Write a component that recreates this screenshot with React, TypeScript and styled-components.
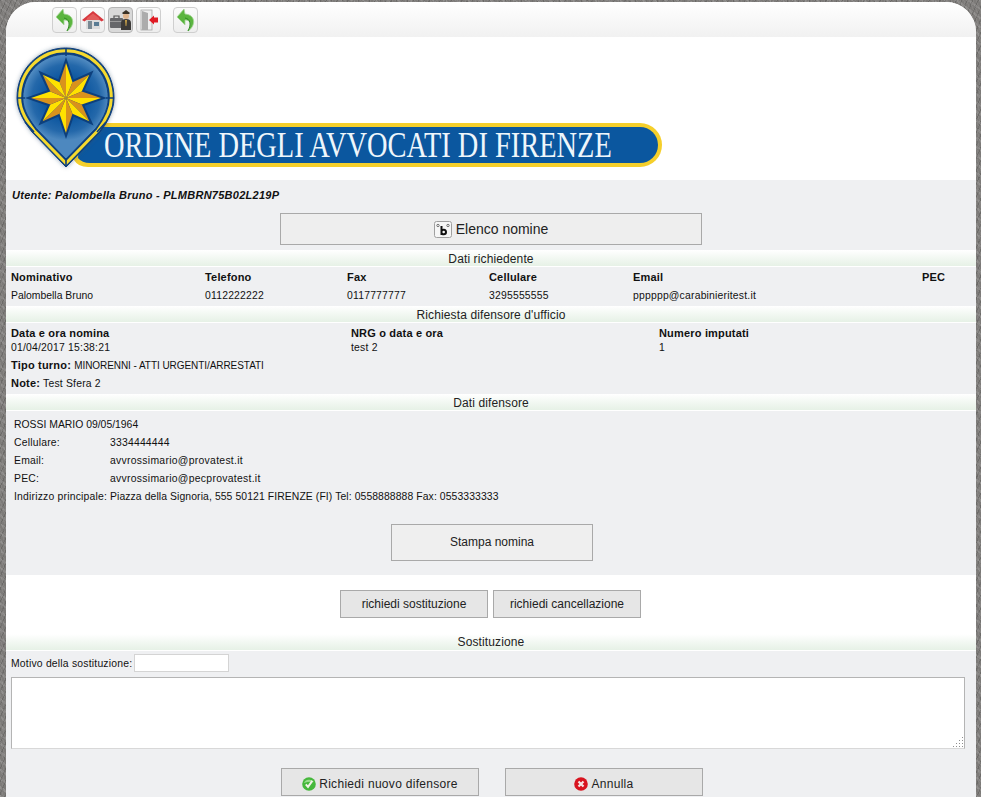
import React from "react"
import styled, { createGlobalStyle } from "styled-components"

const GlobalStyle = createGlobalStyle`
  html, body {
    margin: 0;
    height: 100%;
    overflow: hidden;
    background-color: #7d7b79;
    background-image:
      repeating-linear-gradient(37deg, rgba(255, 255, 255, 0.1) 0 2px, transparent 2px 7px),
      repeating-linear-gradient(113deg, rgba(0, 0, 0, 0.14) 0 1px, transparent 1px 5px),
      repeating-linear-gradient(71deg, rgba(255, 255, 255, 0.07) 0 1px, transparent 1px 3px);
  }
  * {
    box-sizing: border-box;
  }
`

const Page = styled.div`
  width: 970px;
  margin: 2px 0 0 6px;
  background: white;
  border-radius: 30px 30px 0 0;
  color: #111;
  font-family: "Liberation Sans", Arial, sans-serif;
  font-size: 10.4px;
  letter-spacing: 0.2px;
`

const Toolbar = styled.div`
  height: 35px;
  padding: 5px 0 0 46px;
  display: flex;
  gap: 3px;
  background: linear-gradient(#ffffff, #f1f1f1);
  border-radius: 30px 30px 0 0;
`

const ToolButton = styled.div<{ $active?: boolean; $apart?: boolean }>`
  width: 25px;
  height: 26px;
  margin-left: ${(p) => (p.$apart ? "9px" : "0")};
  display: flex;
  align-items: center;
  justify-content: center;
  border: 1px solid ${(p) => (p.$active ? "#b5b5b5" : "#cfcfcf")};
  border-radius: 4px;
  background: ${(p) => (p.$active ? "#d9d9d9" : "linear-gradient(#fbfbfb, #eeeeee)")};
`

const Banner = styled.div`
  height: 143px;
  svg {
    display: block;
  }
`

const Panel = styled.div<{ $height: number }>`
  height: ${(p) => p.$height}px;
  background: #eff0f2;
`

const UserPanel = styled(Panel)`
  padding-top: 9px;
  display: flex;
  flex-direction: column;
  align-items: center;
`

const UserLine = styled.div`
  align-self: flex-start;
  padding-left: 6px;
  font-size: 11px;
  line-height: 13px;
  font-weight: bold;
  font-style: italic;
  letter-spacing: 0.26px;
`

const Button = styled.button<{ $width: number; $height: number; $size?: number }>`
  width: ${(p) => p.$width}px;
  height: ${(p) => p.$height}px;
  padding: 0;
  display: inline-flex;
  align-items: center;
  justify-content: center;
  gap: 3px;
  font-family: "Liberation Sans", Arial, sans-serif;
  font-size: ${(p) => p.$size ?? 12}px;
  letter-spacing: 0;
  color: #222;
  background: #e6e6e6;
  border: 1px solid #a9a9a9;
  border-radius: 0;
`

const ListButton = styled(Button)`
  margin-top: 11px;
  gap: 4px;
  background: #eeeeee;
`

const PrintRow = styled.div`
  padding: 19px 0 0 2px;
  display: flex;
  justify-content: center;
`

const PrintButton = styled(Button)`
  padding-bottom: 2px;
  background: #efefef;
`

const SectionTitle = styled.div<{ $lift?: boolean }>`
  height: 17px;
  line-height: ${(p) => (p.$lift ? "17px" : "19px")};
  text-align: center;
  font-size: 12px;
  letter-spacing: 0.12px;
  color: #222;
  background: linear-gradient(#ffffff, #e6f1e6);
  border-bottom: 1px solid #ffffff;
`

const RequesterGrid = styled.div`
  padding: 1px 0 0 5px;
  display: grid;
  grid-template-columns: 194px 142px 142px 144px 289px 1fr;
  grid-auto-rows: 18px;
  align-items: center;
`

const NominaGrid = styled.div`
  padding: 3px 0 0 5px;
  display: grid;
  grid-template-columns: 340px 308px 1fr;
  grid-auto-rows: 14px;
  align-items: center;
`

const Key = styled.div`
  font-size: 11px;
  font-weight: bold;
  letter-spacing: 0.18px;
`

const Plain = styled.div`
  letter-spacing: 0;
`

const NoteLine = styled.div<{ $top: number }>`
  padding: ${(p) => p.$top}px 0 0 5px;
  line-height: 13px;
  b {
    font-size: 11px;
    letter-spacing: 0.2px;
  }
`

const ShiftValue = styled.span`
  font-size: 10px;
  letter-spacing: -0.06px;
`

const DefenderBlock = styled.div`
  padding: 4px 0 0 8px;
  display: grid;
  grid-template-columns: 96px 1fr;
  grid-auto-rows: 18px;
  align-items: center;
`

const DefenderName = styled.div`
  grid-column: 1 / -1;
  letter-spacing: 0;
`

const MailValue = styled.div`
  letter-spacing: 0.29px;
`

const AddressValue = styled.div`
  letter-spacing: 0.09px;
`

const ActionRow = styled.div`
  height: 59px;
  padding: 15px 1px 0 0;
  display: flex;
  justify-content: center;
  gap: 5px;
`

const Motive = styled.label`
  padding: 3px 0 0 5px;
  display: flex;
  align-items: center;
  gap: 2px;
`

const MotiveInput = styled.input`
  width: 95px;
  height: 18px;
  padding: 0 2px;
  background: white;
  border: 1px solid #d4d4d4;
`

const MotiveArea = styled.textarea`
  display: block;
  width: 954px;
  height: 72px;
  margin: 5px 0 0 5px;
  background: white;
  border: 1px solid #b4b4b4;
  border-bottom-color: #d8d8d8;
  &::-webkit-resizer {
    background-image:
      linear-gradient(135deg, #ffffff 56%, transparent 56%),
      radial-gradient(#8f8f8f 0.8px, transparent 1px);
    background-size: 100% 100%, 3px 3px;
  }
`

const FormActions = styled.div`
  padding: 19px 0 0 2px;
  display: flex;
  justify-content: center;
  gap: 26px;
`

const FormButton = styled(Button)`
  padding-top: 3px;
  letter-spacing: 0.3px;
`

const BackIcon = () => (
  <svg width="23" height="24" viewBox="0 0 23 24">
    <path
      d="M10 1 L3 9 L11 17 L11 12 C16 12 18 15 14 23 C21 19 23 7 11 6 Z"
      fill="#5bb53f"
      stroke="#a6d698"
      strokeWidth="0.8"
    />
    <path d="M14 23 C18 16 16 11 11 10" fill="none" stroke="#2f8a22" strokeWidth="1" />
  </svg>
)

const HomeIcon = () => (
  <svg width="22" height="20" viewBox="0 0 22 20">
    <path d="M4 9 H18 V19 H4 Z" fill="#dcdcdc" />
    <path d="M11 1 L22 10 L19.5 11.5 L11 5 L2.5 11.5 L0 10 Z" fill="#d8393f" />
    <path d="M5 8 L11 3.5 L17 8 L17 10 H5 Z" fill="#e35c5c" />
    <rect x="6" y="11" width="4" height="8" fill="#7a8a94" />
    <rect x="12" y="12" width="5" height="4" fill="#5a7c94" />
  </svg>
)

const OfficerIcon = () => (
  <svg width="22" height="22" viewBox="0 0 22 22">
    <rect x="0" y="9" width="13" height="10" rx="1" fill="#66676a" />
    <path d="M4 9 V7 H9 V9" fill="none" stroke="#555" strokeWidth="1.2" />
    <rect x="0" y="12" width="13" height="1" fill="#9a9a9a" />
    <path d="M11 21 V14 Q11 10 16 10 Q21 10 21 14 V21 Z" fill="#3c3a38" />
    <circle cx="16" cy="7" r="3" fill="#dfb48c" />
    <path d="M12 4 L16 1 L20 4 L19 5 H13 Z" fill="#3a3226" />
    <path d="M15 11 H17 L16.4 17 H15.6 Z" fill="#c9a24a" />
  </svg>
)

const ExitIcon = () => (
  <svg width="22" height="22" viewBox="0 0 22 22">
    <rect x="3" y="1" width="11" height="20" fill="#efefef" stroke="#a8a8a8" strokeWidth="0.8" />
    <path d="M4 2 L10 4 V21 H4 Z" fill="#acacac" />
    <path d="M11 11 L16 6.5 V8.5 H20 V13.5 H16 V15.5 Z" fill="#e01b24" />
  </svg>
)

const AlphabetIcon = () => (
  <svg width="18" height="17" viewBox="0 0 18 17">
    <rect x="0.5" y="0.5" width="17" height="16" rx="2" fill="#f6f6f6" stroke="#a0a0a0" />
    <path d="M7.5 5 V14 M7.5 10.5 C7.5 8 12 8 12 11 C12 14 7.5 14 7.5 11.5" fill="none" stroke="#111" strokeWidth="2" />
    <circle cx="4" cy="4.5" r="1.2" fill="none" stroke="#555" strokeWidth="0.8" />
    <circle cx="14" cy="4.5" r="1.2" fill="none" stroke="#555" strokeWidth="0.8" />
  </svg>
)

const CheckIcon = () => (
  <svg width="14" height="14" viewBox="0 0 14 14">
    <circle cx="7" cy="7" r="6.8" fill="#46b83c" />
    <path d="M2 6 A5.4 4.4 0 0 1 12 5 Q7 4 2 6 Z" fill="#9ade8e" />
    <path d="M3.8 7.3 L6 9.8 L10.3 3.9" fill="none" stroke="#f2f2e8" strokeWidth="2" />
  </svg>
)

const CrossIcon = () => (
  <svg width="14" height="14" viewBox="0 0 14 14">
    <circle cx="7" cy="7" r="6.8" fill="#d8141f" />
    <path d="M4.5 4.5 L9.5 9.5 M9.5 4.5 L4.5 9.5" stroke="#f6e6e6" strokeWidth="2.2" />
  </svg>
)

// star facets, alternating yellow and orange around the centre of the pin
const starPoint = (deg: number, r: number) => {
  const a = ((deg - 90) * Math.PI) / 180
  return `${(66 + r * Math.cos(a)).toFixed(1)},${(98 + r * Math.sin(a)).toFixed(1)}`
}
const tips = [0, 45, 90, 135, 180, 225, 270, 315]
const tipRadius = (deg: number) => (deg % 90 === 0 ? 35 : 33)
const INNER = 17
const starOutline = (grow: number) =>
  tips
    .map((d) => `${starPoint(d, tipRadius(d) + grow)} ${starPoint(d + 22.5, INNER + grow / 2)}`)
    .join(" ")

const PIN = "M17 98 C17 68 40 48 65.5 48 C91 48 114 68 114 98 C114 112 106 124 100 132 L66 167 L32 132 C26 124 17 112 17 98 Z"

const Logo = () => (
  <svg width="670" height="143" viewBox="6 37 670 143">
    <defs>
      <radialGradient id="pinBlue" cx="66" cy="98" r="48" gradientUnits="userSpaceOnUse">
        <stop offset="0.5" stopColor="#0d57a0" />
        <stop offset="0.8" stopColor="#2468aa" />
        <stop offset="1" stopColor="#4d88bf" />
      </radialGradient>
      <filter id="pinGlow" x="-20%" y="-20%" width="140%" height="140%">
        <feDropShadow dx="0" dy="0" stdDeviation="2" floodColor="#33506e" floodOpacity="0.5" />
      </filter>
    </defs>
    <path d="M74 123 H640 A22 22 0 0 1 640 167 H88 Q78 167 74 160 Z" fill="#f5cf2b" />
    <path d="M80 127 H640 A18 18 0 0 1 640 163 H90 Q82 163 78 158 Z" fill="#0b579f" />
    <text
      transform="translate(104 157) scale(0.812 1)"
      fontFamily="'Liberation Serif', 'Times New Roman', serif"
      fontSize="35"
      fill="#eef6fb"
      letterSpacing="0"
    >
      ORDINE DEGLI AVVOCATI DI FIRENZE
    </text>
    <g filter="url(#pinGlow)">
      <path d={PIN} fill="#0d3f7c" stroke="#0d3f7c" strokeWidth="1" />
    </g>
    <path d={PIN} fill="#0d3f7c" stroke="#f5d92e" strokeWidth="3.2" transform="translate(65.5 99) scale(0.945) translate(-65.5 -99)" />
    <path d={PIN} fill="url(#pinBlue)" stroke="#0d3f7c" strokeWidth="1" transform="translate(65.5 100) scale(0.88) translate(-65.5 -100)" />
    <path
      d="M66 48 V56 M17 98 H25 M106 98 H114 M106 122 L97 132 M25 122 L34 132 M66 158 V167"
      stroke="#0d3f7c"
      strokeWidth="1.6"
    />
    <polygon points={starOutline(6)} fill="#0d3f7c" />
    {tips.map((d) => (
      <g key={d}>
        <polygon points={`66,98 ${starPoint(d, tipRadius(d))} ${starPoint(d - 22.5, INNER)}`} fill="#d9921c" />
        <polygon points={`66,98 ${starPoint(d, tipRadius(d))} ${starPoint(d + 22.5, INNER)}`} fill="#ffe100" />
      </g>
    ))}
  </svg>
)

export default function App() {
  return (
    <>
      <GlobalStyle />
      <Page>
        <Toolbar>
          <ToolButton><BackIcon /></ToolButton>
          <ToolButton><HomeIcon /></ToolButton>
          <ToolButton $active><OfficerIcon /></ToolButton>
          <ToolButton><ExitIcon /></ToolButton>
          <ToolButton $apart><BackIcon /></ToolButton>
        </Toolbar>
        <Banner><Logo /></Banner>
        <UserPanel $height={70}>
          <UserLine>Utente: Palombella Bruno - PLMBRN75B02L219P</UserLine>
          <ListButton $width={422} $height={32} $size={14}>
            <AlphabetIcon /> Elenco nomine
          </ListButton>
        </UserPanel>
        <SectionTitle>Dati richiedente</SectionTitle>
        <Panel $height={39}>
          <RequesterGrid>
            <Key>Nominativo</Key>
            <Key>Telefono</Key>
            <Key>Fax</Key>
            <Key>Cellulare</Key>
            <Key>Email</Key>
            <Key>PEC</Key>
            <Plain>Palombella Bruno</Plain>
            <div>0112222222</div>
            <div>0117777777</div>
            <div>3295555555</div>
            <div>pppppp@carabinieritest.it</div>
            <div />
          </RequesterGrid>
        </Panel>
        <SectionTitle>Richiesta difensore d'ufficio</SectionTitle>
        <Panel $height={71}>
          <NominaGrid>
            <Key>Data e ora nomina</Key>
            <Key>NRG o data e ora</Key>
            <Key>Numero imputati</Key>
            <div>01/04/2017 15:38:21</div>
            <div>test 2</div>
            <div>1</div>
          </NominaGrid>
          <NoteLine $top={5}><b>Tipo turno:</b> <ShiftValue>MINORENNI - ATTI URGENTI/ARRESTATI</ShiftValue></NoteLine>
          <NoteLine $top={5}><b>Note:</b> Test Sfera 2</NoteLine>
        </Panel>
        <SectionTitle>Dati difensore</SectionTitle>
        <Panel $height={164}>
          <DefenderBlock>
            <DefenderName>ROSSI MARIO 09/05/1964</DefenderName>
            <div>Cellulare:</div>
            <div>3334444444</div>
            <div>Email:</div>
            <MailValue>avvrossimario@provatest.it</MailValue>
            <div>PEC:</div>
            <MailValue>avvrossimario@pecprovatest.it</MailValue>
            <div>Indirizzo principale:</div>
            <AddressValue>Piazza della Signoria, 555 50121 FIRENZE (FI) Tel: 0558888888 Fax: 0553333333</AddressValue>
          </DefenderBlock>
          <PrintRow>
            <PrintButton $width={202} $height={37}>Stampa nomina</PrintButton>
          </PrintRow>
        </Panel>
        <ActionRow>
          <Button $width={148} $height={28}>richiedi sostituzione</Button>
          <Button $width={148} $height={28}>richiedi cancellazione</Button>
        </ActionRow>
        <SectionTitle $lift>Sostituzione</SectionTitle>
        <Panel $height={160}>
          <Motive>
            Motivo della sostituzione:
            <MotiveInput />
          </Motive>
          <MotiveArea />
          <FormActions>
            <FormButton $width={198} $height={28}>
              <CheckIcon /> Richiedi nuovo difensore
            </FormButton>
            <FormButton $width={198} $height={28}>
              <CrossIcon /> Annulla
            </FormButton>
          </FormActions>
        </Panel>
      </Page>
    </>
  )
}
